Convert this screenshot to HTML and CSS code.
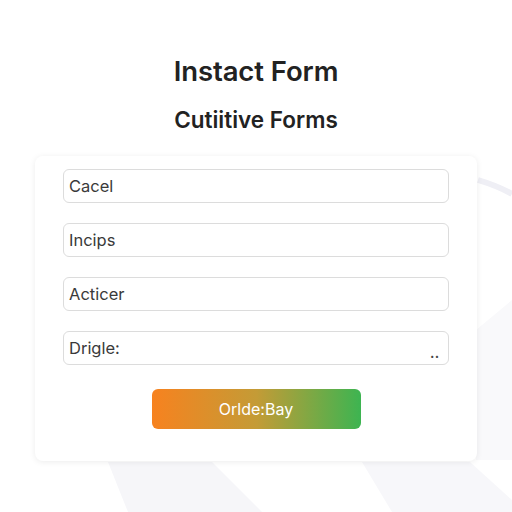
FILE: index.html
```html
<!DOCTYPE html>
<html lang="en">
<head>
<meta charset="utf-8">
<title>Instact Form</title>
<link rel="stylesheet" href="styles.css">
</head>
<body>
<svg class="decor" width="512" height="512" viewBox="0 0 512 512" aria-hidden="true">
  <polygon points="108,462 212,462 262,512 128,512" fill="#f6f6f9"/>
  <polygon points="362,462 470,462 512,500 512,512 392,512" fill="#f7f7fa"/>
  <path d="M478 180 Q498 186 512 194" stroke="#efeff5" stroke-width="6" fill="none"/>
  <polygon points="476,330 512,300 512,460 476,460" fill="#f9f9fb"/>
</svg>
<main class="page">
  <h1 class="title">Instact Form</h1>
  <h2 class="subtitle">Cutiitive Forms</h2>
  <form class="card">
    <div class="field">Cacel</div>
    <div class="field">Incips</div>
    <div class="field">Acticer</div>
    <div class="field field-area">Drigle:<span class="grip">&bull;&bull;</span></div>
    <button type="button" class="submit">Orlde:Bay</button>
  </form>
</main>
</body>
</html>
```
FILE: styles.css
```css
html, body {
  margin: 0;
  padding: 0;
  background: #ffffff;
}
body {
  font-family: Inter, "Liberation Sans", Arial, sans-serif;
  color: #222;
  position: relative;
  width: 512px;
  height: 512px;
  overflow: hidden;
}
.decor {
  position: absolute;
  left: 0;
  top: 0;
  z-index: 0;
}
.page {
  position: relative;
  z-index: 1;
  display: flex;
  flex-direction: column;
  align-items: center;
  padding-top: 55px;
}
.title {
  margin: 0;
  font-size: 27.5px;
  font-weight: 600;
  line-height: 32px;
  color: #222;
  letter-spacing: -0.1px;
}
.subtitle {
  margin: 19px 0 0;
  font-size: 22.5px;
  font-weight: 600;
  line-height: 28px;
  color: #222;
}
.card {
  margin: 22px 0 0;
  width: 442px;
  box-sizing: border-box;
  padding: 13px 28px 32px;
  background: #fff;
  border-radius: 8px;
  box-shadow: 0 1px 6px rgba(0, 0, 0, 0.08);
  display: flex;
  flex-direction: column;
  gap: 20px;
}
.field {
  position: relative;
  height: 34px;
  box-sizing: border-box;
  border: 1px solid #dcdcdc;
  border-radius: 6px;
  padding: 0 5px;
  display: flex;
  align-items: center;
  font-size: 16.5px;
  font-weight: 400;
  color: #3a3a3a;
  background: #fff;
}
.grip {
  position: absolute;
  right: 8px;
  bottom: 4px;
  font-size: 7px;
  letter-spacing: 1px;
  color: #444;
  line-height: 1;
}
.submit {
  align-self: center;
  margin-top: 4px;
  width: 209px;
  height: 40px;
  border: none;
  border-radius: 6px;
  background: linear-gradient(90deg, #f7821f 0%, #c49b36 50%, #3db451 100%);
  color: #fff;
  font-family: Inter, "Liberation Sans", Arial, sans-serif;
  font-size: 16px;
  font-weight: 400;
}
```
